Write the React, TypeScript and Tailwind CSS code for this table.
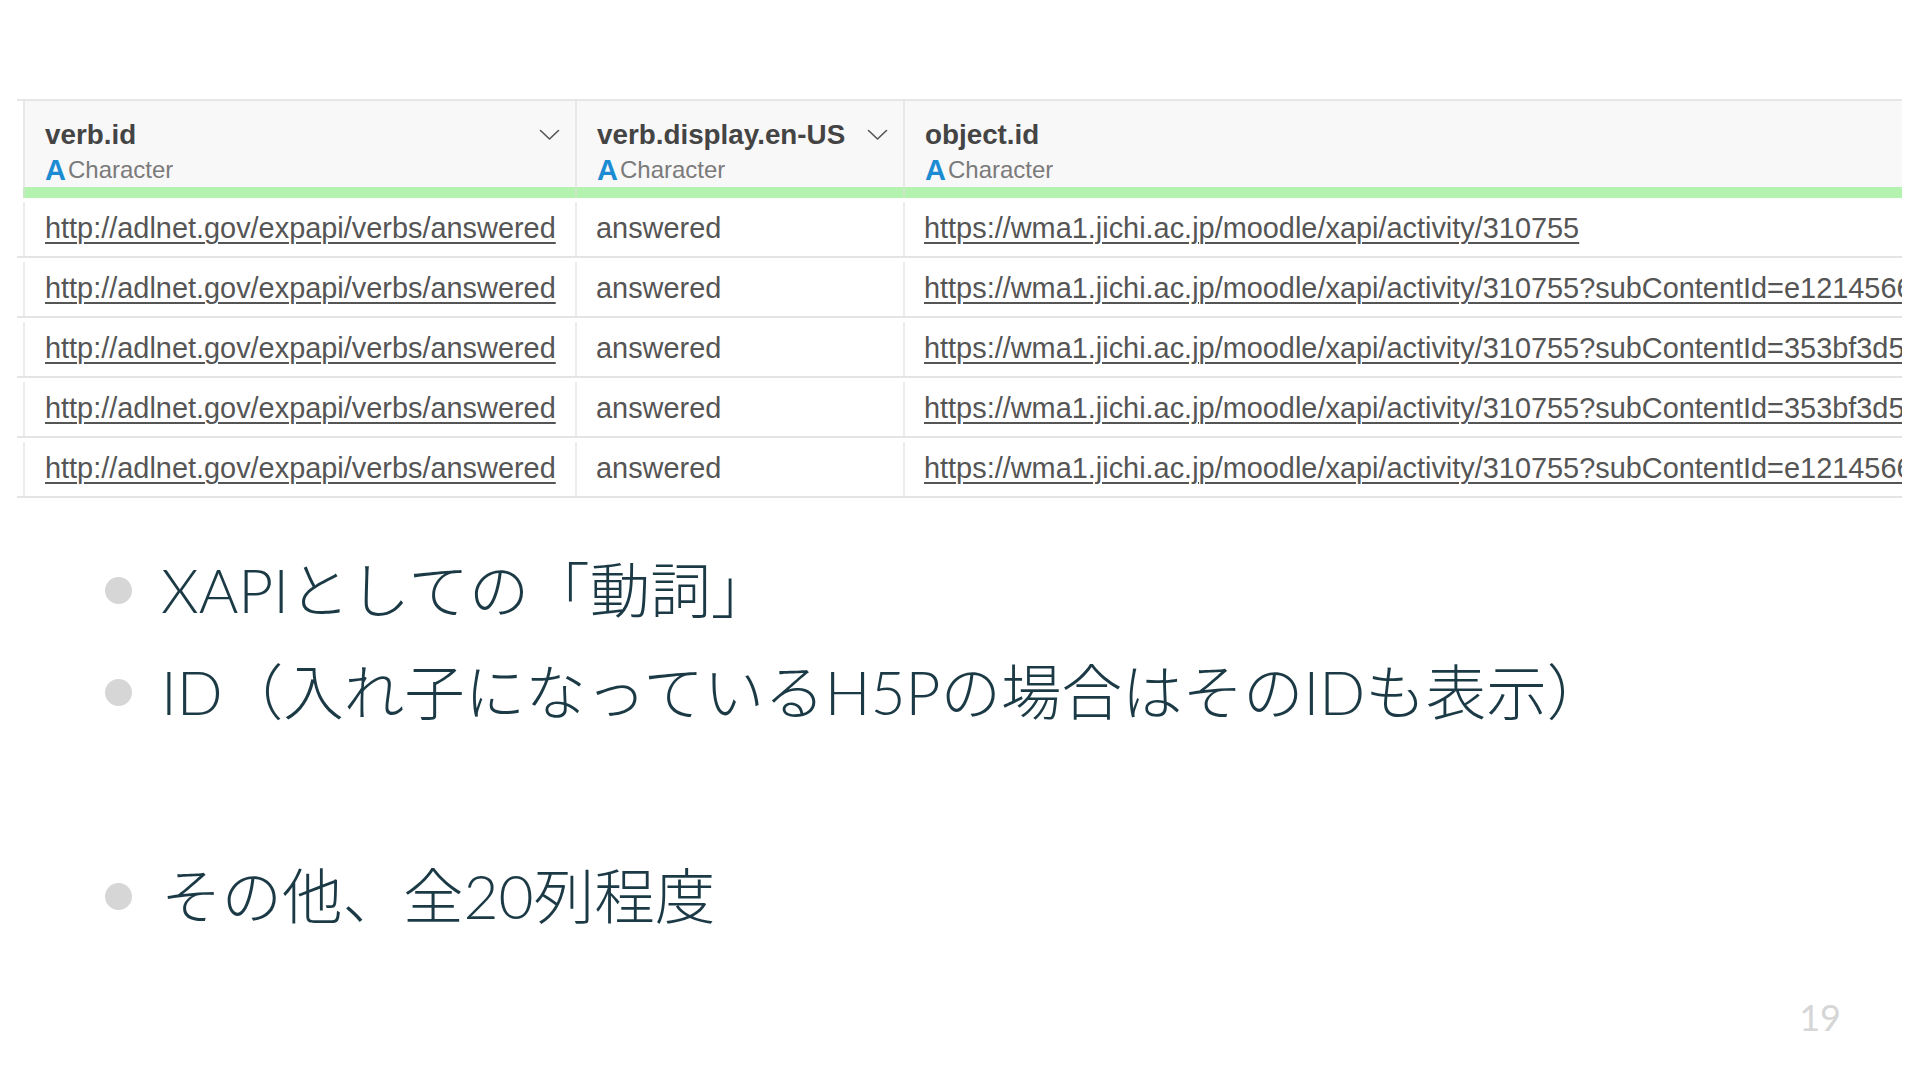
import React from "react";

const Chevron = () => (
  <svg width="21" height="12" viewBox="0 0 21 12" fill="none" className="shrink-0">
    <path d="M1.5 1.5 L10.5 10 L19.5 1.5" stroke="#555" strokeWidth="1.6" strokeLinecap="round" strokeLinejoin="round" />
  </svg>
);

const TypeLabel = () => (
  <div className="flex items-center leading-[30px]">
    <span className="text-[29px] font-bold text-[#1b8bd3]">A</span>
    <span className="text-[24px] text-[#7b7b7b] ml-[2px]">Character</span>
  </div>
);

const HeaderCell = ({ title, width, chevron }: { title: string; width: string; chevron?: boolean }) => (
  <div className={`${width} shrink-0 border-l-2 border-[#e8e8e8] bg-[#f8f8f8] pl-[20px] pr-[15px] pt-[17px]`}>
    <div className="flex items-center justify-between h-[34px]">
      <span className="text-[27.8px] font-bold text-[#444]">{title}</span>
      {chevron && <Chevron />}
    </div>
    <div className="mt-[3px]">
      <TypeLabel />
    </div>
  </div>
);

const verb = "http://adlnet.gov/expapi/verbs/answered";
const objects = [
  "https://wma1.jichi.ac.jp/moodle/xapi/activity/310755",
  "https://wma1.jichi.ac.jp/moodle/xapi/activity/310755?subContentId=e1214566e1a2",
  "https://wma1.jichi.ac.jp/moodle/xapi/activity/310755?subContentId=353bf3d5a7e1",
  "https://wma1.jichi.ac.jp/moodle/xapi/activity/310755?subContentId=353bf3d5a7e1",
  "https://wma1.jichi.ac.jp/moodle/xapi/activity/310755?subContentId=e1214566e1a2",
];

const Bullet = ({ children }: { children: React.ReactNode }) => (
  <div className="flex items-center h-[102px]">
    <div className="w-[27px] h-[27px] rounded-full bg-[#d6d6d6] shrink-0" />
    <div className="ml-[29px] text-[60.5px] font-light text-[#1b3a45] whitespace-nowrap">{children}</div>
  </div>
);

export default function App() {
  return (
    <div
      className="w-[1920px] h-[1080px] bg-white flex flex-col overflow-hidden"
      style={{ fontFamily: '"Liberation Sans", Arial, sans-serif' }}
    >
      <div className="pt-[99px]">
        <div className="ml-[17px] w-[1885px] border-t-2 border-[#e6e6e6] overflow-hidden">
          <div className="flex h-[86px]">
            <div className="w-[6px] shrink-0 bg-white" />
            <HeaderCell width="w-[552px]" title="verb.id" chevron />
            <HeaderCell width="w-[328px]" title="verb.display.en-US" chevron />
            <HeaderCell width="w-[999px]" title="object.id" />
          </div>
          <div className="flex h-[11px]">
            <div className="w-[6px] shrink-0 bg-white" />
            <div className="w-[552px] shrink-0 bg-[#b3f3af] border-l-2 border-[#c9e8c6]" />
            <div className="w-[328px] shrink-0 bg-[#b3f3af] border-l-2 border-[#c9e8c6]" />
            <div className="w-[999px] shrink-0 bg-[#b3f3af] border-l-2 border-[#c9e8c6]" />
          </div>
          {objects.map((o, i) => (
            <div key={i} className="flex h-[60px] border-b-2 border-[#e4e4e4] text-[28.9px] text-[#555] pt-[4px]">
              <div className="w-[6px] shrink-0" />
              <div className="w-[552px] shrink-0 border-l-2 border-[#ececec] pl-[20px] flex items-center whitespace-nowrap overflow-hidden">
                <span className="underline decoration-[1.5px] underline-offset-[4px]">{verb}</span>
              </div>
              <div className="w-[328px] shrink-0 border-l-2 border-[#ececec] pl-[19px] flex items-center whitespace-nowrap">
                answered
              </div>
              <div className="w-[999px] shrink-0 border-l-2 border-[#ececec] pl-[19px] flex items-center whitespace-nowrap overflow-hidden">
                <span className="underline decoration-[1.5px] underline-offset-[4px]">{o}</span>
              </div>
            </div>
          ))}
        </div>
      </div>

      <div
        className="mt-[41px] ml-[105px]"
        style={{ fontFamily: '"Lato", "Noto Sans CJK JP", sans-serif' }}
      >
        <Bullet>XAPIとしての「動詞」</Bullet>
        <Bullet>ID（入れ子になっているH5Pの場合はそのIDも表示）</Bullet>
        <div className="h-[102px]" />
        <Bullet>その他、全20列程度</Bullet>
      </div>

      <div className="mt-auto flex justify-end pr-[79px] pb-[45px]">
        <span className="text-[36px] text-[#d6d6d6] leading-none" style={{ fontFamily: '"Lato", sans-serif' }}>
          19
        </span>
      </div>
    </div>
  );
}
